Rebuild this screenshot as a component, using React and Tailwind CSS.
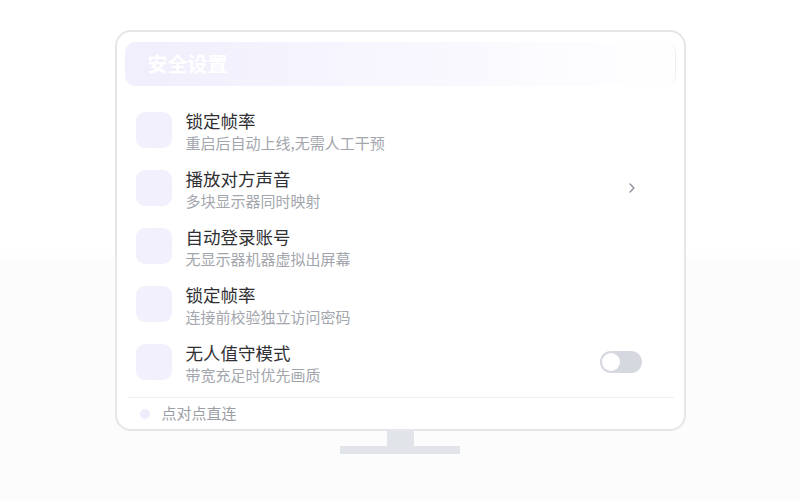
import React, { useState } from 'react';

const rows = [
  { title: '锁定帧率', sub: '重启后自动上线,无需人工干预', action: null },
  { title: '播放对方声音', sub: '多块显示器同时映射', action: 'chevron' },
  { title: '自动登录账号', sub: '无显示器机器虚拟出屏幕', action: null },
  { title: '锁定帧率', sub: '连接前校验独立访问密码', action: null },
  { title: '无人值守模式', sub: '带宽充足时优先画质', action: 'toggle' },
];

const Toggle = () => {
  const [on, setOn] = useState(false);
  return (
    <button
      onClick={() => setOn(!on)}
      className={`w-[42px] h-[22px] rounded-full p-[2px] flex items-center ${on ? 'bg-[#a99cf0] justify-end' : 'bg-[#d5d8df] justify-start'}`}
    >
      <span className="w-[18px] h-[18px] rounded-full bg-white"></span>
    </button>
  );
};

const Row = ({ title, sub, action }) => (
  <div className="h-[58px] flex items-center pl-[9px] pr-[32px]">
    <div className="w-[36px] h-[36px] rounded-[9px] bg-[#f2f0fc] shrink-0"></div>
    <div className="ml-[14px] flex-1 flex flex-col pt-[2px]">
      <span className="text-[17.5px] leading-[22px] font-normal text-[#303034]">{title}</span>
      <span className="text-[15px] leading-[21px] text-[#a3a6ad]">{sub}</span>
    </div>
    {action === 'chevron' && (
      <svg width="8" height="12" viewBox="0 0 8 12" className="mr-[6px]">
        <path d="M2 2l4 4-4 4" fill="none" stroke="#8a8f98" strokeWidth="1.4" strokeLinecap="round" strokeLinejoin="round" />
      </svg>
    )}
    {action === 'toggle' && <Toggle />}
  </div>
);

export default function App() {
  return (
    <div
      className="w-[800px] h-[500px] bg-[linear-gradient(to_bottom,#ffffff_50%,#fcfcfd_53%)] flex flex-col items-center pt-[30px]"
      style={{ fontFamily: '"Noto Sans CJK SC", "Noto Sans", sans-serif' }}
    >
      <div className="w-[571px] h-[401px] border-2 border-[#e4e6ea] rounded-[16px] bg-white flex flex-col pt-[10px] px-[8px]">
        <div className="h-[44px] rounded-[10px] bg-gradient-to-r from-[#f1eefd] via-[#f8f6fe] to-white flex items-center pl-[23px] border-r border-[#eceef2]">
          <span className="text-[20px] font-bold text-white">安全设置</span>
        </div>
        <div className="px-[2px] pt-[15px] flex flex-col">
          {rows.map((r, i) => (
            <Row key={i} {...r} />
          ))}
          <div className="mt-[6px] border-t border-[#eef0f3] h-[32px] flex items-center pl-[13px]">
            <span className="w-[10px] h-[10px] rounded-full bg-[#efedfb]"></span>
            <span className="ml-[12px] text-[15px] text-[#9a9ea6]">点对点直连</span>
          </div>
        </div>
      </div>
      <div className="w-[27px] h-[15px] bg-[#e1e4e9]"></div>
      <div className="w-[120px] h-[8px] bg-[#e1e4e9]"></div>
    </div>
  );
}
